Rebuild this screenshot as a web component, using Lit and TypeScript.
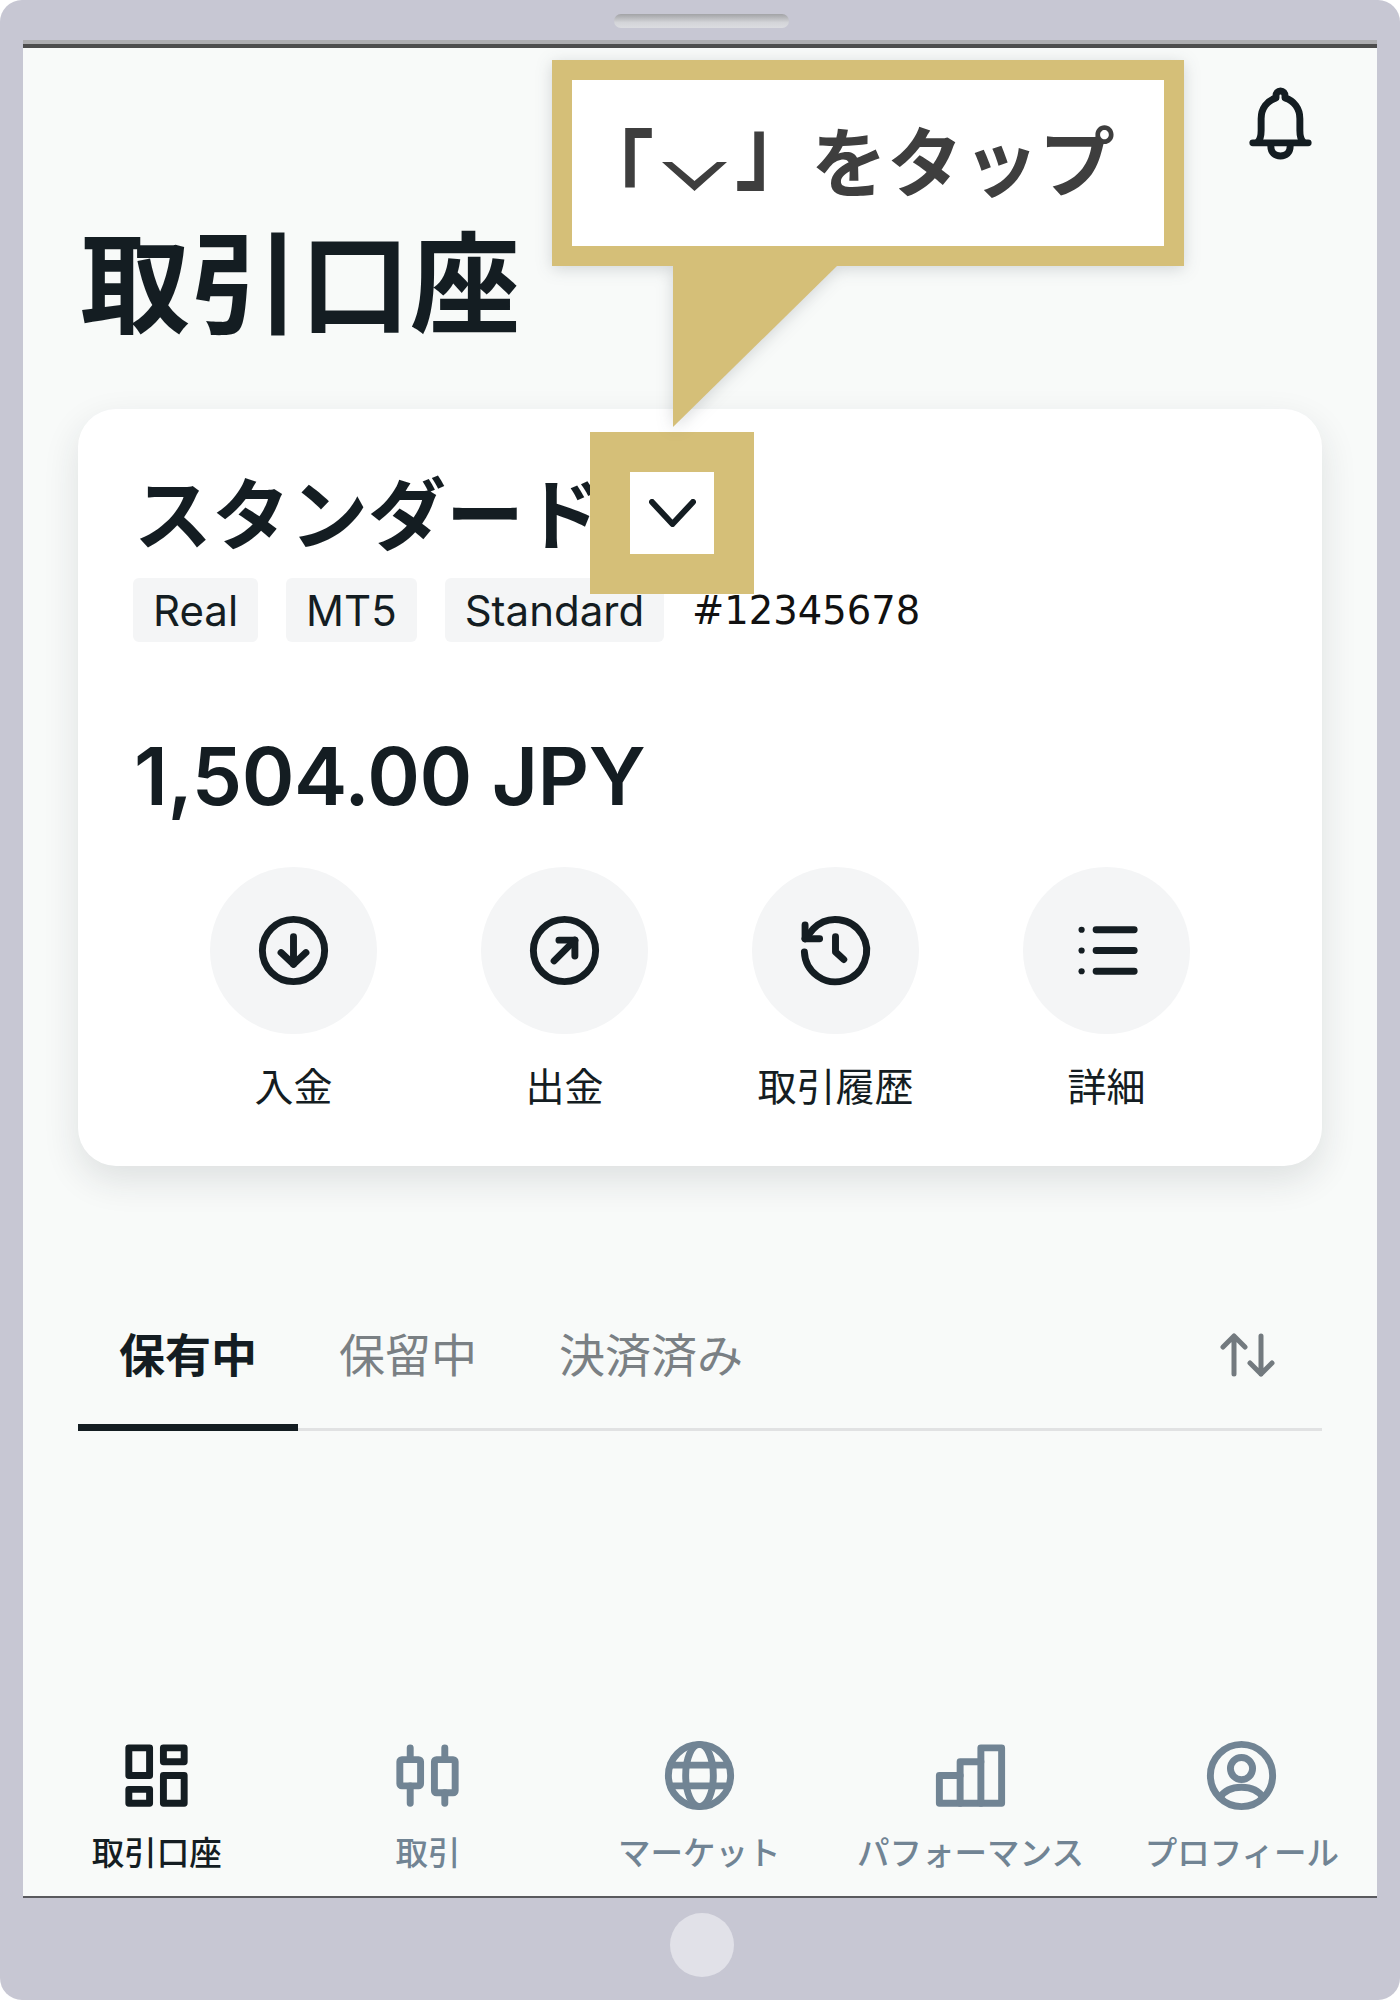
import { css, html, svg, LitElement } from 'lit';
import { customElement } from 'lit/decorators.js';

const icons = {
  bell: svg`<path d="M4 17.6H20" /><path d="M5.4 17.4C6.2 16.6 6.4 15.6 6.4 14V10.6C6.4 7.7 8.1 5.4 10.7 4.6V4C10.7 3.2 11.2 2.6 12 2.6S13.3 3.2 13.3 4V4.6C15.9 5.4 17.6 7.7 17.6 10.6V14C17.6 15.6 17.8 16.6 18.6 17.4" /><path d="M9.2 18V18.6C9.2 20.4 10.4 21.4 12 21.4S14.8 20.4 14.8 18.6V18" />`,
  deposit: svg`<circle cx="12" cy="12" r="9" /><path d="M12 8V16" /><path d="M8.4 12.6L12 16L15.6 12.6" />`,
  withdraw: svg`<circle cx="12" cy="12" r="9" /><path d="M9 15L15 9" /><path d="M10.4 9H15V13.6" />`,
  history: svg`<path d="M3 12.4A9 9 0 1 0 5.6 5.7L3.2 8.6" /><path d="M3.2 4.6V8.6H7.4" /><path d="M12 8V12.4L14.4 14.6" />`,
  list: svg`<path d="M9 6H20M9 12H20M9 18H20" /><circle class="solid" cx="4.8" cy="6" r="0.9" /><circle class="solid" cx="4.8" cy="12" r="0.9" /><circle class="solid" cx="4.8" cy="18" r="0.9" />`,
  accounts: svg`<rect x="4" y="4" width="6" height="8" /><rect x="14" y="4" width="6" height="4" /><rect x="14" y="12" width="6" height="8" /><rect x="4" y="16" width="6" height="4" />`,
  trade: svg`<rect x="4" y="7.4" width="6" height="7.6" rx="0.6" /><rect x="14" y="7.4" width="6" height="9.6" rx="0.6" /><path d="M7 4V7M7 15V20M17 4V7M17 17V20" />`,
  market: svg`<circle cx="12" cy="12" r="9" /><ellipse cx="12" cy="12" rx="4" ry="9" /><path d="M3.6 9H20.4M3.6 15H20.4" />`,
  performance: svg`<path d="M3 20V12H9V8H15V4H21V20Z" /><path d="M9 12V20M15 8V20" />`,
  profile: svg`<circle cx="12" cy="12" r="9" /><circle cx="12" cy="10" r="3.2" /><path d="M5.8 18.4C7 16.4 9.2 15.4 12 15.4S17 16.4 18.2 18.4" />`,
};

const actions = [
  { icon: icons.deposit, label: '入金' },
  { icon: icons.withdraw, label: '出金' },
  { icon: icons.history, label: '取引履歴' },
  { icon: icons.list, label: '詳細' },
];

const navItems = [
  { icon: icons.accounts, label: '取引口座', active: true },
  { icon: icons.trade, label: '取引' },
  { icon: icons.market, label: 'マーケット' },
  { icon: icons.performance, label: 'パフォーマンス' },
  { icon: icons.profile, label: 'プロフィール' },
];

const icon = (body: unknown) =>
  html`<svg class="icon" viewBox="0 0 24 24">${body}</svg>`;

@customElement('app-root')
export class AppRoot extends LitElement {
  static styles = css`
    :host {
      display: block;
      width: 1400px;
      height: 2000px;
      font-family: Inter, 'Noto Sans CJK JP', sans-serif;
      color: #141d22;
      background: #fff;
    }

    .device {
      display: flex;
      flex-direction: column;
      height: 100%;
      background: #c7c7d3;
      border-radius: 22px;
      overflow: hidden;
    }

    .top-bezel {
      display: flex;
      justify-content: center;
      height: 40px;
      padding: 14px 0 0 3px;
      box-sizing: border-box;
    }

    .speaker {
      width: 175px;
      height: 14px;
      border-radius: 7px;
      background: linear-gradient(#a2a3a6, #d3d4d8 60%, #dcdde1);
    }

    .bottom-bezel {
      display: flex;
      justify-content: center;
      height: 102px;
      padding: 15px 0 0 4px;
      box-sizing: border-box;
    }

    .home {
      width: 64px;
      height: 64px;
      border-radius: 50%;
      background: #e1e1e8;
    }

    .screen {
      position: relative;
      flex: 1;
      display: flex;
      flex-direction: column;
      margin: 0 23px;
      background: #f8faf9;
      border-top: 4px solid #adadb0;
      border-bottom: 2px solid #5a5a5e;
    }

    .status-line {
      height: 4px;
      background: #4d4d4d;
    }

    .icon {
      width: 83px;
      height: 83px;
      fill: none;
      stroke: currentColor;
      stroke-width: 2;
      stroke-linecap: round;
      stroke-linejoin: round;
      display: block;
    }

    .icon .solid {
      fill: currentColor;
      stroke: none;
    }

    .head {
      display: flex;
      flex-direction: column;
      padding: 34px 55px 0;
    }

    .bell {
      align-self: flex-end;
    }

    h1 {
      margin: 66px 0 0 2px;
      font-size: 110px;
      line-height: 108px;
      font-weight: 700;
    }

    .card {
      position: relative;
      margin: 70px 55px 0;
      height: 757px;
      padding: 69px 56px 0;
      box-sizing: border-box;
      background: #fff;
      border-radius: 38px;
      box-shadow: 0 14px 36px rgba(30, 40, 50, 0.12);
    }

    .name {
      font-size: 78px;
      line-height: 76px;
      font-weight: 700;
      white-space: nowrap;
    }

    .meta {
      display: flex;
      align-items: center;
      gap: 28px;
      margin: 24px 0 0 -1px;
      height: 64px;
      font-size: 42px;
    }

    .tag {
      display: flex;
      align-items: center;
      height: 64px;
      padding: 0 20px;
      border-radius: 6px;
      background: #f4f5f6;
    }

    .account-no {
      font-family: 'DejaVu Sans', sans-serif;
      font-size: 38.5px;
      color: #111;
    }

    .balance {
      margin-top: 94px;
      font-size: 80px;
      line-height: 80px;
      font-weight: 600;
      letter-spacing: -0.4px;
    }

    .actions {
      display: grid;
      grid-template-columns: repeat(4, 271px);
      margin: 51px 0 0 24px;
    }

    .action {
      display: flex;
      flex-direction: column;
      align-items: center;
    }

    .action-circle {
      display: flex;
      align-items: center;
      justify-content: center;
      width: 167px;
      height: 167px;
      border-radius: 50%;
      background: #f4f5f6;
    }

    .action-label {
      margin-top: 31px;
      font-size: 39px;
      line-height: 44px;
    }

    .tabs {
      display: flex;
      margin: 159px 55px 0;
      border-bottom: 3px solid #e1e2e3;
    }

    .tab {
      padding: 0 41px 39px;
      margin-bottom: -3px;
      font-size: 46px;
      line-height: 60px;
      color: #7a8084;
      border-bottom: 7px solid transparent;
    }

    .tab.active {
      font-weight: 700;
      color: #141d22;
      border-bottom-color: #141d22;
    }

    .sort {
      width: 55px;
      height: 44px;
      margin: 8px 47px 0 auto;
      fill: none;
      stroke: #737a7f;
      stroke-width: 5;
      stroke-linecap: round;
      stroke-linejoin: round;
    }

    .nav {
      display: grid;
      grid-template-columns: repeat(5, 271.3px);
      margin: auto 0 0 -2px;
      padding-bottom: 22px;
    }

    .nav-item {
      display: flex;
      flex-direction: column;
      align-items: center;
      color: #718494;
    }

    .nav-item.active {
      color: #141d22;
    }

    .nav-label {
      margin-top: 17px;
      font-size: 32.5px;
      line-height: 40px;
      font-weight: 500;
      white-space: nowrap;
    }

    /* overlay: instruction callout */
    .callout {
      position: absolute;
      left: 529px;
      top: 16px;
      width: 632px;
      filter: drop-shadow(0 3px 8px rgba(40, 50, 60, 0.18));
    }

    .callout-box {
      display: flex;
      align-items: center;
      height: 206px;
      box-sizing: border-box;
      border: 20px solid #d5bf78;
      background: #fff;
      color: #3e3e3e;
      font-size: 76px;
      line-height: 76px;
      font-weight: 700;
      white-space: nowrap;
    }

    .bracket {
      display: inline-block;
      width: 92px;
      font-size: 92px;
      line-height: 92px;
      font-weight: 700;
    }

    .bracket.open {
      margin-left: -4px;
      transform: translateY(11px) scaleX(0.87);
    }

    .bracket.close {
      margin: 0 -9.5px 0 1.5px;
      transform: translateY(-14px) scaleX(0.87);
    }

    .callout-chevron {
      width: 65px;
      height: 29px;
      flex: none;
      margin: 27px 0 0 2px;
      fill: #3e3e3e;
    }

    .callout-tail {
      width: 165px;
      height: 162px;
      margin-left: 121px;
      margin-top: -1px;
      background: #d5bf78;
      clip-path: polygon(0 0, 100% 0, 0 100%);
    }

    /* overlay: highlight over the account switcher */
    .switcher {
      position: absolute;
      left: 512px;
      top: 23px;
      display: flex;
      align-items: center;
      justify-content: center;
      width: 164px;
      height: 162px;
      box-sizing: border-box;
      border: 40px solid #d5bf78;
      background: #fff;
    }

    .switcher svg {
      width: 47px;
      height: 28px;
      fill: none;
      stroke: #141d22;
      stroke-width: 6;
      stroke-linecap: round;
      stroke-linejoin: round;
    }
  `;

  render() {
    return html`
      <div class="device">
        <div class="top-bezel"><div class="speaker"></div></div>
        <div class="screen">
          <div class="status-line"></div>
          <div class="head">
            <div class="bell">${icon(icons.bell)}</div>
            <h1>取引口座</h1>
          </div>
          <div class="card">
            <div class="name">スタンダード</div>
            <div class="meta">
              <span class="tag">Real</span>
              <span class="tag">MT5</span>
              <span class="tag">Standard</span>
              <span class="account-no">#12345678</span>
            </div>
            <div class="balance">1,504.00 JPY</div>
            <div class="actions">
              ${actions.map(
                (a) => html`<div class="action">
                  <div class="action-circle">${icon(a.icon)}</div>
                  <div class="action-label">${a.label}</div>
                </div>`,
              )}
            </div>
            <div class="switcher">
              <svg viewBox="0 0 47 28"><path d="M3 3L23.5 25L44 3" /></svg>
            </div>
          </div>
          <div class="tabs">
            <div class="tab active">保有中</div>
            <div class="tab">保留中</div>
            <div class="tab">決済済み</div>
            <svg class="sort" viewBox="0 0 55 44">
              <path d="M14 41V3M3 14L14 3L25 14" />
              <path d="M41 3V41M30 30L41 41L52 30" />
            </svg>
          </div>
          <div class="nav">
            ${navItems.map(
              (n) => html`<div class="nav-item ${n.active ? 'active' : ''}">
                ${icon(n.icon)}
                <div class="nav-label">${n.label}</div>
              </div>`,
            )}
          </div>
          <div class="callout">
            <div class="callout-box">
              <span class="bracket open">「</span>
              <svg class="callout-chevron" viewBox="0 0 65 29"><polygon points="0,0 10,0 32.5,19 55,0 65,0 32.5,29" /></svg>
              <span class="bracket close">」</span>
              <span>をタップ</span>
            </div>
            <div class="callout-tail"></div>
          </div>
        </div>
        <div class="bottom-bezel"><div class="home"></div></div>
      </div>
    `;
  }
}
